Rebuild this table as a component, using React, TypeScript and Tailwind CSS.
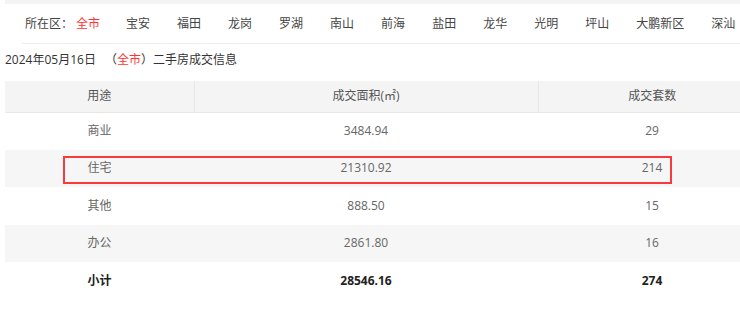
import React from "react";

const districts = ["宝安", "福田", "龙岗", "罗湖", "南山", "前海", "盐田", "龙华", "光明", "坪山", "大鹏新区", "深汕"];

const rows = [
  { use: "商业", area: "3484.94", count: "29" },
  { use: "住宅", area: "21310.92", count: "214" },
  { use: "其他", area: "888.50", count: "15" },
  { use: "办公", area: "2861.80", count: "16" },
];

export default function App() {
  return (
    <div
      className="relative w-[740px] h-[309px] overflow-hidden bg-white text-xs"
      style={{ fontFamily: '"Open Sans", "Noto Sans CJK SC", sans-serif' }}
    >
      {/* top strip */}
      <div className="ml-[5px] h-[4px] bg-[#f4f4f4]" />

      {/* district filter */}
      <div className="ml-[22px] h-[40px] border-b border-[#eeeeee] flex items-center pl-[3px] text-[#444] whitespace-nowrap">
        <span>所在区：</span>
        <span className="ml-[3px] text-[#ff3333]">全市</span>
        {districts.map((d, i) => (
          <span key={d} className={i === 0 ? "ml-[26px]" : "ml-[27px]"}>
            {d}
          </span>
        ))}
      </div>

      {/* title */}
      <div className="h-[37px] pt-[8px] pl-[5px] leading-[16px] text-[#333] whitespace-nowrap">
        2024年05月16日
        <span className="ml-[9px]">（</span>
        <span className="text-[#ff3333]">全市</span>
        <span>）二手房成交信息</span>
      </div>

      {/* table */}
      <table className="ml-[5px] w-[761px] table-fixed border-collapse text-center">
        <colgroup>
          <col className="w-[189px]" />
          <col className="w-[344px]" />
          <col className="w-[228px]" />
        </colgroup>
        <thead>
          <tr className="h-[31px] bg-[#f4f4f4] text-[#555] border-b border-[#e8e8e8]">
            <th className="font-normal border-r border-[#e8e8e8]">用途</th>
            <th className="font-normal border-r border-[#e8e8e8]">成交面积(㎡)</th>
            <th className="font-normal">成交套数</th>
          </tr>
        </thead>
        <tbody className="text-[#666]">
          {rows.map((r, i) => (
            <tr key={r.use} className={i % 2 === 1 ? "h-[37.5px] bg-[#f6f6f6]" : "h-[37.5px] bg-white"}>
              <td>{r.use}</td>
              <td>{r.area}</td>
              <td>{r.count}</td>
            </tr>
          ))}
          <tr className="h-[37.5px] font-bold text-[#222]">
            <td>小计</td>
            <td>28546.16</td>
            <td>274</td>
          </tr>
        </tbody>
      </table>

      {/* highlight annotation */}
      <div className="absolute left-[63px] top-[156px] w-[609px] h-[28px] border-2 border-[#fa3a3a] pointer-events-none" />
    </div>
  );
}
